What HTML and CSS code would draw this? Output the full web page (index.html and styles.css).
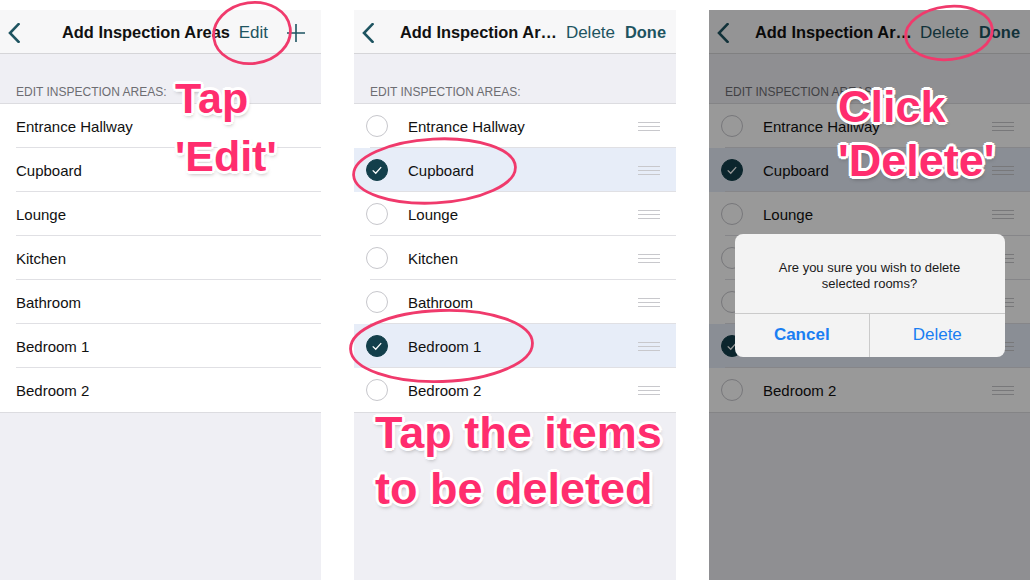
FILE: index.html
```html
<!DOCTYPE html>
<html>
<head>
<meta charset="utf-8">
<title>Delete Inspection Areas</title>
<link rel="stylesheet" href="styles.css">
</head>
<body>
<div class="stage">

  <section class="phone">
    <header class="nav">
      <svg class="back" viewBox="0 0 12 20"><path d="M10.5 1.2 L2 10 L10.5 18.8" /></svg>
      <span class="title">Add Inspection Areas</span>
      <div class="actions">
        <span class="btn">Edit</span>
        <svg class="plus" viewBox="0 0 18 18"><path d="M9 0 V18 M0 9 H18" /></svg>
      </div>
    </header>
    <div class="section-head">EDIT INSPECTION AREAS:</div>
    <ul class="list">
      <li class="row">Entrance Hallway</li>
      <li class="row">Cupboard</li>
      <li class="row">Lounge</li>
      <li class="row">Kitchen</li>
      <li class="row">Bathroom</li>
      <li class="row">Bedroom 1</li>
      <li class="row">Bedroom 2</li>
    </ul>
  </section>

  <section class="phone mid">
    <header class="nav editing">
      <svg class="back" viewBox="0 0 12 20"><path d="M10.5 1.2 L2 10 L10.5 18.8" /></svg>
      <span class="title">Add Inspection Ar…</span>
      <div class="actions">
        <span class="btn">Delete</span>
        <span class="btn strong">Done</span>
      </div>
    </header>
    <div class="section-head">EDIT INSPECTION AREAS:</div>
    <ul class="list">
      <li class="row edit"><span class="check"></span>Entrance Hallway<span class="handle"></span></li>
      <li class="row edit selected"><span class="check on"><svg viewBox="0 0 22 22"><path d="M6.3 11.4 L9.6 14.6 L15.6 7.8" /></svg></span>Cupboard<span class="handle"></span></li>
      <li class="row edit"><span class="check"></span>Lounge<span class="handle"></span></li>
      <li class="row edit"><span class="check"></span>Kitchen<span class="handle"></span></li>
      <li class="row edit"><span class="check"></span>Bathroom<span class="handle"></span></li>
      <li class="row edit selected"><span class="check on"><svg viewBox="0 0 22 22"><path d="M6.3 11.4 L9.6 14.6 L15.6 7.8" /></svg></span>Bedroom 1<span class="handle"></span></li>
      <li class="row edit"><span class="check"></span>Bedroom 2<span class="handle"></span></li>
    </ul>
  </section>

  <section class="phone">
    <header class="nav editing">
      <svg class="back" viewBox="0 0 12 20"><path d="M10.5 1.2 L2 10 L10.5 18.8" /></svg>
      <span class="title">Add Inspection Ar…</span>
      <div class="actions">
        <span class="btn">Delete</span>
        <span class="btn strong">Done</span>
      </div>
    </header>
    <div class="section-head">EDIT INSPECTION AREAS:</div>
    <ul class="list">
      <li class="row edit"><span class="check"></span>Entrance Hallway<span class="handle"></span></li>
      <li class="row edit selected"><span class="check on"><svg viewBox="0 0 22 22"><path d="M6.3 11.4 L9.6 14.6 L15.6 7.8" /></svg></span>Cupboard<span class="handle"></span></li>
      <li class="row edit"><span class="check"></span>Lounge<span class="handle"></span></li>
      <li class="row edit"><span class="check"></span>Kitchen<span class="handle"></span></li>
      <li class="row edit"><span class="check"></span>Bathroom<span class="handle"></span></li>
      <li class="row edit selected"><span class="check on"><svg viewBox="0 0 22 22"><path d="M6.3 11.4 L9.6 14.6 L15.6 7.8" /></svg></span>Bedroom 1<span class="handle"></span></li>
      <li class="row edit"><span class="check"></span>Bedroom 2<span class="handle"></span></li>
    </ul>
    <div class="dim">
      <div class="alert">
        <p class="alert-msg">Are you sure you wish to delete<br>selected rooms?</p>
        <div class="alert-btns">
          <span class="alert-btn bold">Cancel</span>
          <span class="alert-btn">Delete</span>
        </div>
      </div>
    </div>
  </section>

  <svg class="marks" viewBox="0 0 1030 580">
    <ellipse cx="252" cy="33" rx="38.5" ry="30.5" transform="rotate(-8 252 33)" />
    <ellipse cx="434.5" cy="171" rx="81" ry="32" transform="rotate(-3 434.5 171)" />
    <ellipse cx="441.5" cy="346" rx="91" ry="35.5" transform="rotate(-2 441.5 346)" />
    <ellipse cx="949" cy="33" rx="43.5" ry="26.5" transform="rotate(-6 949 33)" />
  </svg>

  <div class="note note-edit">Tap<br>'Edit'</div>
  <div class="note note-items">Tap the items<br>to be deleted</div>
  <div class="note note-delete">Click<br>'Delete'</div>
</div>
</body>
</html>
```

FILE: styles.css
```css
* {
  box-sizing: border-box;
  margin: 0;
  padding: 0;
}

body {
  background: #ffffff;
  font-family: "Liberation Sans", Arial, Helvetica, sans-serif;
  color: #111111;
}

.stage {
  position: relative;
  width: 1030px;
  height: 580px;
  padding-top: 10px;
  display: flex;
  gap: 33px;
  overflow: hidden;
}

.phone {
  position: relative;
  flex: none;
  width: 321px;
  height: 570px;
  background: #efeff4;
  overflow: hidden;
}

.phone.mid {
  width: 322px;
}

/* navigation bar */
.nav {
  height: 44px;
  background: #f7f7f8;
  border-bottom: 1px solid #d5d5d8;
  display: flex;
  align-items: center;
  padding: 2px 16px 0 8px;
}

.back {
  width: 12px;
  height: 20px;
  flex: none;
  fill: none;
  stroke: #1e5461;
  stroke-width: 2.6;
  stroke-linecap: square;
  stroke-linejoin: miter;
}

.title {
  margin-left: 42px;
  font-weight: bold;
  font-size: 16.4px;
  white-space: nowrap;
  color: #111111;
}

.actions {
  margin-left: auto;
  display: flex;
  align-items: center;
  gap: 19px;
}

.btn {
  font-size: 17px;
  color: #1e5461;
  white-space: nowrap;
}

.btn.strong {
  font-weight: bold;
  font-size: 16.4px;
}

.plus {
  width: 18px;
  height: 18px;
  fill: none;
  stroke: #1e5461;
  stroke-width: 1.6;
}

.nav.editing {
  padding-right: 10px;
}

.nav.editing .title {
  margin-left: 26px;
}

.nav.editing .actions {
  gap: 10px;
}

/* section header */
.section-head {
  height: 49px;
  display: flex;
  align-items: flex-end;
  padding: 0 16px 4px;
  font-size: 12px;
  line-height: 14px;
  color: #6d6d72;
}

/* list */
.list {
  list-style: none;
  background: #ffffff;
  border-top: 1px solid #dcdce0;
  border-bottom: 1px solid #dcdce0;
}

.row {
  height: 44px;
  display: flex;
  align-items: center;
  padding-left: 16px;
  font-size: 15px;
  color: #111111;
  background-image: linear-gradient(#e0e0e4, #e0e0e4);
  background-size: calc(100% - 16px) 1px;
  background-position: right bottom;
  background-repeat: no-repeat;
}

.row:last-child {
  background-image: none;
}

.row.edit {
  padding-left: 12px;
}

.row.selected {
  background-color: #e7edf8;
}

.check {
  flex: none;
  width: 22px;
  height: 22px;
  margin-right: 20px;
  border-radius: 50%;
  border: 1px solid #c7c7cc;
  background: #ffffff;
}

.check.on {
  background: #133f4b;
  border-color: #133f4b;
}

.check svg {
  display: block;
  width: 20px;
  height: 20px;
  fill: none;
  stroke: #ffffff;
  stroke-width: 1.4;
}

.handle {
  margin-left: auto;
  margin-right: 16px;
  width: 22px;
  height: 9px;
  border-top: 1px solid #c8c8cc;
  border-bottom: 1px solid #c8c8cc;
  background: linear-gradient(#c8c8cc, #c8c8cc) center / 100% 1px no-repeat;
}

/* dimmed overlay and alert */
.dim {
  position: absolute;
  inset: 0;
  background: rgba(0, 0, 0, 0.4);
  display: flex;
  align-items: center;
  justify-content: center;
}

.alert {
  width: 270px;
  background: #f3f3f3;
  border-radius: 8px;
  overflow: hidden;
}

.alert-msg {
  padding: 26px 16px 21px;
  text-align: center;
  font-size: 13px;
  line-height: 16px;
  color: #1a1a1a;
}

.alert-btns {
  display: flex;
  height: 44px;
  border-top: 1px solid #cacaca;
}

.alert-btn {
  flex: 1;
  display: flex;
  align-items: center;
  justify-content: center;
  font-size: 17px;
  color: #1a7ef2;
}

.alert-btn + .alert-btn {
  border-left: 1px solid #cacaca;
}

.alert-btn.bold {
  font-weight: bold;
}

/* annotations */
.marks {
  position: absolute;
  left: 0;
  top: 0;
  width: 1030px;
  height: 580px;
  fill: none;
  stroke: #f03a6c;
  stroke-width: 2.8;
  pointer-events: none;
}

.note {
  position: absolute;
  font-family: "Liberation Sans", Arial, Helvetica, sans-serif;
  font-weight: bold;
  color: #ff2d6e;
  white-space: nowrap;
  text-shadow:
    2px 0 0 #fff, -2px 0 0 #fff, 0 2px 0 #fff, 0 -2px 0 #fff,
    2px 2px 0 #fff, -2px -2px 0 #fff, 2px -2px 0 #fff, -2px 2px 0 #fff,
    3px 0 0 #fff, -3px 0 0 #fff, 0 3px 0 #fff, 0 -3px 0 #fff,
    1px 3px 4px rgba(0, 0, 0, 0.35);
}

.note-edit {
  left: 175px;
  top: 69px;
  font-size: 43px;
  line-height: 58px;
}

.note-items {
  left: 375px;
  top: 405px;
  font-size: 45px;
  line-height: 56px;
}

.note-delete {
  left: 838px;
  top: 80px;
  font-size: 45px;
  line-height: 54px;
}
```
